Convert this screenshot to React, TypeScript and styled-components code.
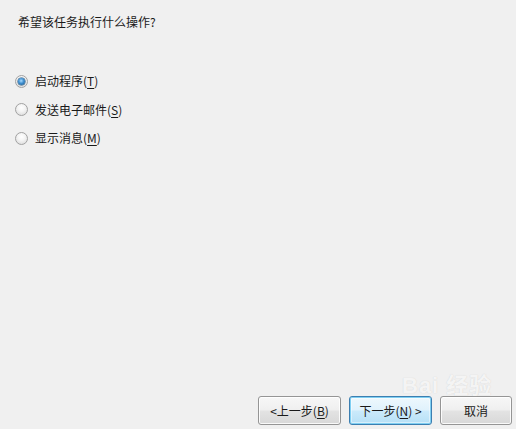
import React from "react";
import styled, { createGlobalStyle, css } from "styled-components";

const Global = createGlobalStyle`
  html, body { margin: 0; padding: 0; background: #f0f0f0; }
  body { font-family: "Noto Sans CJK SC", "Noto Sans", sans-serif; font-size: 12px; color: #1a1a1a; }
`;

const Page = styled.div`
  position: relative;
  width: 516px;
  height: 429px;
  box-sizing: border-box;
  display: flex;
  flex-direction: column;
  background: #f0f0f0;
  padding: 14px 4px 4px 0;
  overflow: hidden;
`;

const Title = styled.div`
  padding-left: 18px;
  line-height: 16px;
  height: 16px;
`;

const Options = styled.div`
  margin-top: 43px;
  padding-left: 15px;
  display: flex;
  flex-direction: column;
  gap: 12.5px;
`;

const Option = styled.label`
  display: flex;
  align-items: center;
  gap: 7px;
  height: 16px;
  line-height: 16px;
`;

const Radio = styled.span<{ $checked?: boolean }>`
  position: relative;
  width: 13px;
  height: 13px;
  box-sizing: border-box;
  border-radius: 50%;
  border: 1px solid #a2a2a2;
  background: radial-gradient(circle at 50% 35%, #ffffff 0%, #f4f4f4 40%, #d6d6d6 100%);
  flex: none;
  ${(p) =>
    p.$checked &&
    css`
      &::after {
        content: "";
        position: absolute;
        left: 2px;
        top: 2px;
        width: 7px;
        height: 7px;
        border-radius: 50%;
        background: radial-gradient(circle at 45% 40%, #a9dcff 0%, #3f8fd0 45%, #16507f 100%);
        box-shadow: 0 0 0 0.5px #1c4f78;
      }
    `}
`;

const U = styled.span`
  text-decoration: underline;
  text-underline-offset: 2px;
`;

const Bar = styled.div`
  margin-top: auto;
  display: flex;
  justify-content: flex-end;
  gap: 8px;
`;

const Button = styled.button<{ $primary?: boolean; $w: number }>`
  width: ${(p) => p.$w}px;
  height: 29px;
  box-sizing: border-box;
  border-radius: 3px;
  font-family: "Noto Sans CJK SC", "Noto Sans", sans-serif;
  font-size: 12px;
  line-height: 16px;
  color: #1a1a1a;
  padding: 0;
  border: 1px solid #959595;
  background: linear-gradient(#f7f7f7 0%, #efefef 48%, #e3e3e3 52%, #d8d8d8 100%);
  box-shadow: inset 0 0 0 1px rgba(255, 255, 255, 0.85);
  ${(p) =>
    p.$primary &&
    css`
      border-color: #3c7fb1;
      background: linear-gradient(#eef8fd 0%, #e0f2fc 48%, #cbeafb 52%, #b6e0f6 100%);
      box-shadow: inset 0 0 0 1px #7fcff2, inset 0 0 0 2px rgba(255, 255, 255, 0.45);
    `}
`;

const Watermark = styled.div`
  position: absolute;
  left: 402px;
  top: 374px;
  color: rgba(255, 255, 255, 0.8);
  font-family: "Liberation Sans", "Noto Sans CJK SC", sans-serif;
  font-size: 22px;
  font-weight: bold;
  line-height: 24px;
  letter-spacing: 1px;
  pointer-events: none;
  text-shadow: 0 0 1px rgba(190, 190, 190, 0.7);
`;

export default function App() {
  return (
    <>
      <Global />
      <Page>
        <Title>希望该任务执行什么操作?</Title>
        <Options>
          <Option>
            <Radio $checked />
            <span>
              启动程序(<U>T</U>)
            </span>
          </Option>
          <Option>
            <Radio />
            <span>
              发送电子邮件(<U>S</U>)
            </span>
          </Option>
          <Option>
            <Radio />
            <span>
              显示消息(<U>M</U>)
            </span>
          </Option>
        </Options>
        <Bar>
          <Button $w={83}>
            &lt;上一步(<U>B</U>)
          </Button>
          <Button $w={83} $primary>
            下一步(<U>N</U>) &gt;
          </Button>
          <Button $w={72}>取消</Button>
        </Bar>
        <Watermark>Bai 经验</Watermark>
      </Page>
    </>
  );
}
